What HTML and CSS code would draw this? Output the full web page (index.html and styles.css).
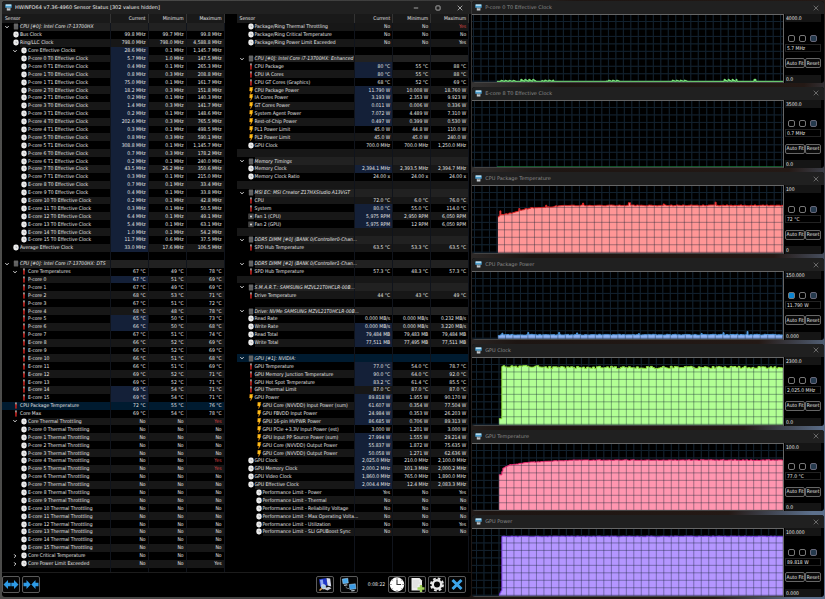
FILE: index.html
```
<!DOCTYPE html>
<html lang="en">
<head>
<meta charset="utf-8">
<title>HWiNFO64 Sensor Status</title>
<link rel="stylesheet" href="styles.css">
</head>
<body>
<svg class="symbols" aria-hidden="true">
  <symbol id="i-clock" viewBox="0 0 6 7"><rect x=".3" y=".6" width="5.4" height="5.8" rx="2.4" fill="#ececec"/><path d="M3 2.300v1.400h1.300" fill="none" stroke="#999" stroke-width=".6"/></symbol>
  <symbol id="i-temp" viewBox="0 0 6 7"><rect x="2.100" y=".4" width="1.700" height="3" fill="#a9a09c"/><rect x="2.100" y="2.200" width="1.700" height="4.400" fill="#b3201c"/></symbol>
  <symbol id="i-bolt" viewBox="0 0 6 7"><path d="M1.800.2h3.200L4.300 2.200H5L2.500 6.900 2.900 4H1.500z" fill="#ffc21a" stroke="#d8790a" stroke-width=".3"/></symbol>
  <symbol id="i-chip" viewBox="0 0 6 7"><rect x=".8" y=".5" width="4.400" height="6" rx=".4" fill="#5f5f5f"/><path d="M.8 2h4.400" stroke="#858585" stroke-width=".4"/></symbol>
  <symbol id="i-fan" viewBox="0 0 6 7"><rect x=".2" y=".6" width="5.600" height="5.600" rx=".5" fill="#444"/><circle cx="3" cy="3.400" r="1" fill="#ddd"/></symbol>
  <symbol id="i-open" viewBox="0 0 4 4"><path d="M.4 1.200 2 2.800 3.600 1.200" fill="none" stroke="#eee" stroke-width="1"/></symbol>
  <symbol id="i-closed" viewBox="0 0 4 4"><path d="M1.200.4 2.800 2 1.200 3.600" fill="none" stroke="#eee" stroke-width="1"/></symbol>
  <symbol id="i-app" viewBox="0 0 7 7"><path d="M.3.5h6.400v3.300H.3z" fill="#4a9fd0"/><path d="M.8.5h5.400v1.200H.8z" fill="#d8eef8"/><path d="M1.800 3.800h3.600v2.700H1.800z" fill="#c5ccd0"/><path d="M2.400 4.600h2.400" stroke="#555" stroke-width=".6"/></symbol>
  <symbol id="i-close" viewBox="0 0 6 6"><path d="M.7.7l4.600 4.600M5.300.7.7 5.300" stroke="currentColor" stroke-width=".7"/></symbol>
</svg>

<div class="desktop">
  <main class="window sensors-window">
    <header class="titlebar">
      <svg class="app-icon"><use href="#i-app"/></svg>
      <h1>HWiNFO64 v7.36-4960 Sensor Status [302 values hidden]</h1>
      <div class="caption">
        <button aria-label="Minimize"><svg viewBox="0 0 6 6"><path d="M.8 3h4.400" stroke="#ddd" stroke-width=".7"/></svg></button>
        <button aria-label="Maximize"><svg viewBox="0 0 6 6"><rect x=".9" y=".9" width="4.200" height="4.200" rx=".8" fill="none" stroke="#ddd" stroke-width=".7"/></svg></button>
        <button aria-label="Close"><svg viewBox="0 0 6 6"><use href="#i-close"/></svg></button>
      </div>
    </header>
    <div class="panels">
      <div class="panel panel-left"><table id="left"></table></div>
      <div class="panel panel-right"><table id="right"></table></div>
    </div>
    <footer class="toolbar">
      <button class="tool" aria-label="Expand columns"><svg viewBox="0 0 16 15"><path d="M.5 7.500 5 3v2.700h2.700v3.600H5V12zM15.500 7.500 11 3v2.700H8.300v3.600H11V12z" fill="#2e9be6"/></svg></button>
      <button class="tool" aria-label="Shrink columns"><svg viewBox="0 0 16 15"><path d="M7.700 7.500 3.500 3v2.700H.5v3.600h3V12zM8.300 7.500 12.500 3v2.700h3v3.600h-3V12z" fill="#2e9be6"/></svg></button>
      <span class="spacer"></span>
      <button class="tool" aria-label="Hardware summary"><svg viewBox="0 0 16 15"><path d="M2 2.300 9.500 1l1 7.500-7.300 1.300z" fill="#2038c8"/><path d="M3 3l2.800-.5.8 6-2.700.5z" fill="#8fa8f0"/><path d="M9.500 1l3.700.4 1 8.200-3.700-1z" fill="#d9def0"/><path d="M6 11.500l6-1.800 2.500 1.500-4 2.300z" fill="#c9cdd8"/><circle cx="6.500" cy="9.800" r="2.200" fill="#a8d0ee" stroke="#e4e4e4" stroke-width=".7"/><path d="M4.900 11.400 2.500 13.500" stroke="#d39a55" stroke-width="1.500"/></svg></button>
      <button class="tool" aria-label="Remote sensors"><svg viewBox="0 0 16 15"><path d="M1.300 2 6.800 1.300 7.300 6 2 6.800z" fill="#49a8ec" stroke="#b8dcf4" stroke-width=".5"/><path d="M2.800 7.800 6 7.300l.8 1-3.500.8z" fill="#b8c4cc"/><path d="M8.300 7.500l6-.7.6 5-6 .8z" fill="#3a9ae4" stroke="#b8dcf4" stroke-width=".5"/><path d="M10 13.300l3.300-.4.700 1-3.500.6z" fill="#b8c4cc"/><path d="M5 9.500c0 1.800 1.300 2 3 2" fill="none" stroke="#8a949c" stroke-width=".8"/></svg></button>
      <time class="elapsed">0:08:22</time>
      <button class="tool" aria-label="Reset clock"><svg viewBox="0 0 16 15"><circle cx="8" cy="7.500" r="7.200" fill="#fff"/><path d="M8 2.500v5h4" fill="none" stroke="#333" stroke-width="1.100"/><path d="M8 .8v1.300M8 13v1.300M1.200 7.500h1.400M13.400 7.500h1.400M3.200 2.800l.9.900M12.800 2.800l-.9.900M3.200 12.200l.9-.9M12.800 12.200l-.9-.9" stroke="#444" stroke-width=".7"/></svg></button>
      <button class="tool" aria-label="Start logging"><svg viewBox="0 0 16 15"><path d="M2.500 1h8l2.500 2.500V13.500H2.500z" fill="#ededed"/><path d="M4 4h6M4 6h7M4 8h5M4 10h4" stroke="#ccc" stroke-width=".6"/><path d="M10.800 8h2.400v2.300h2.300v2.400h-2.300V15h-2.400v-2.300H8.500v-2.400h2.300z" fill="#a3d35b"/></svg></button>
      <button class="tool" aria-label="Settings"><svg viewBox="0 0 16 15"><circle cx="8" cy="7.500" r="6" fill="none" stroke="#e8e8e8" stroke-width="2" stroke-dasharray="2.700 2.012"/><circle cx="8" cy="7.500" r="4.200" fill="none" stroke="#e8e8e8" stroke-width="2.400"/></svg></button>
      <button class="tool" aria-label="Close sensors"><svg viewBox="0 0 16 15"><path d="M3.500 3l9 9M12.500 3l-9 9" stroke="#3da5ea" stroke-width="3"/></svg></button>
    </footer>
  </main>
  <aside class="graphs" id="graphs"></aside>
</div>
<script src="app.js"></script>
</body>
</html>
```
FILE: styles.css
```
* { box-sizing: border-box; }
body {
  margin: 0;
  background: #2a2624;
  color: #e6e6e6;
  font: 5px/7px "DejaVu Sans Condensed", "Noto Sans", sans-serif;
}
button, input { font: inherit; color: inherit; margin: 0; }
h1, h2 { margin: 0; font: 5px/7px "DejaVu Sans", sans-serif; }
svg { display: block; }
.symbols { position: absolute; width: 0; height: 0; }

.desktop {
  display: flex;
  gap: 1px;
  height: 100vh;
  background: linear-gradient(100deg, #50504e 0%, #3a3a3a 50%, #1d1512 62%, #241915 88%, #5c708c 97%);
}
.window { background: #000; border-radius: 3px; overflow: hidden; }
.sensors-window {
  flex: 4 1 0;
  margin: 1px 0 2px 2px;
  display: flex;
  flex-direction: column;
}
.titlebar {
  flex: none;
  display: flex;
  align-items: center;
  gap: 3px;
  height: 13px;
  padding-left: 3px;
  background: #202020;
}
.titlebar h1 { flex: 1; color: #f0f0f0; }
.app-icon { width: 7px; height: 7px; }
.caption { display: flex; }
.caption button {
  width: 22px;
  height: 13px;
  padding: 0;
  border: 0;
  background: none;
  display: grid;
  place-items: center;
}
.caption svg { width: 6px; height: 6px; color: #ddd; }

.panels {
  flex: 1;
  min-height: 0;
  display: grid;
  grid-template-columns: 1fr 1fr;
}
.panel { min-width: 0; }
.panel-left { padding-right: 12px; }
.panel-right { padding-right: 2px; }
.panel table {
  width: 100%;
  height: 100%;
  table-layout: fixed;
  border-collapse: separate;
  border-spacing: 0;
}
.panel th, .panel td {
  padding: 0 2px 0 0;
  font-weight: normal;
  text-align: right;
  white-space: nowrap;
  border-right: 1px solid #10141c;
}
.panel thead tr { height: 9px; }
.panel thead th { background: #191919; border-right-color: #333; }
.panel thead th:first-child { text-align: left; padding-left: 3px; }
.col-value { width: 38px; }
.panel tbody th { padding-right: 0; text-align: left; }

.name { display: flex; align-items: center; }
.name .twist { flex: none; width: 4px; height: 4px; margin: 0 4px 0 3px; }
.name .icon { flex: none; width: 6px; height: 7px; margin-right: 1px; }
.name.sub { padding-left: 8px; }
.name span { flex: none; }

tr.odd td { background: #171717; }
tr.odd th { background: linear-gradient(to right, #000 18px, #171717 18px); }
tr.odd.deep th { background: linear-gradient(to right, #000 26px, #171717 26px); }
tr.group td { background: #212121; }
tr.group th { background: linear-gradient(to right, #000 18px, #212121 18px); font-style: italic; }
tr td.hot { background: #142038; }
tr.selected td, tr.selected th { background: #001b30; }
td.alert { color: #d84444; }
tr.tail { height: 4px; }
tr.tail td { line-height: 1px; }

.toolbar {
  flex: none;
  display: flex;
  align-items: center;
  gap: 2px;
  height: 25px;
  padding: 0 5px 1px 0;
  border-top: 1px solid #1c1c1c;
}
.spacer { flex: 1; }
.tool {
  width: 18px;
  height: 17px;
  padding: 0;
  border: 1px solid #5a5a5a;
  border-radius: 2px;
  background: #050505;
  display: grid;
  place-items: center;
}
.tool svg { width: 16px; height: 15px; }
.toolbar .spacer + .tool { margin-right: 4px; }
.elapsed { padding: 0 1px 0 8px; }

.graphs {
  flex: 3 1 0;
  min-width: 0;
  display: grid;
  grid-template-rows: repeat(7, 1fr);
  gap: 4px;
  padding: 1px 1px 2px 0;
}
.graph { display: flex; flex-direction: column; min-height: 0; }
.graph .titlebar h2 { flex: 1; color: #8c8c8c; }
.graph .titlebar .close {
  width: 16px;
  height: 13px;
  padding: 0;
  border: 0;
  background: none;
  color: #888;
  display: grid;
  place-items: center;
}
.graph .close svg { width: 6px; height: 6px; }
.graph .body { flex: 1; min-height: 0; display: flex; }
.plot {
  flex: 1;
  min-width: 0;
  border-top: 1px solid #666;
  border-right: 1px solid #666;
  border-bottom: 1px solid #444;
}
.plot svg { width: 100%; height: 100%; }
.grid-back { stroke: #16242f; stroke-width: 1; fill: none; }
.grid-front { stroke: #102030; stroke-opacity: .38; stroke-width: 1; fill: none; }
.side {
  flex: none;
  width: 40px;
  padding: 0 3px 0 1px;
  display: flex;
  flex-direction: column;
  justify-content: space-between;
}
.side input[type=text] {
  width: 100%;
  height: 8px;
  padding: 0 1px;
  border: 0;
  background: #151515;
}
.side input.value[type=text] { border: 1px solid #222; background: #000; line-height: 6px; }
.readout { display: grid; gap: 2px; padding-top: 6px; }
.checks { display: flex; gap: 4px; padding-left: 3px; }
.checks input {
  appearance: none;
  width: 7px;
  height: 7px;
  border: 1px solid #777;
  border-radius: 2px;
  background: #000;
}
.checks input:disabled { background: #24394d; border-color: #667; }
.checks input:checked { background: #0a84d0; }
.actions { display: flex; }
.actions button {
  flex: auto;
  height: 10px;
  padding: 0;
  border: 1px solid #666;
  border-radius: 2px;
  background: #0a0a0a;
  white-space: nowrap;
}
```
FILE: app.js
```
// Row format: flags+icon | name | current | minimum | maximum
// Flags: ">" nested, "v" expanded, "^" collapsed, "*" selected.
// A value that starts with "!" has a highlighted cell, one with "~" is an alert.
const ICONS = { c: 'clock', t: 'temp', b: 'bolt', g: 'chip', f: 'fan' };

const clocks = ['5.7|1.0|147.5', '0.4|0.1|265.3', '0.8|0.3|208.8', '75.0|0.1|161.7', '18.2|0.3|151.8', '0.2|0.1|140.3',
  '1.4|0.3|141.7', '0.2|0.1|148.6', '202.6|0.3|765.5', '0.3|0.1|498.5', '0.8|0.3|590.1', '308.8|0.1|1,145.7',
  '0.7|0.3|178.2', '0.2|0.1|240.0', '43.5|26.2|350.6', '0.3|0.1|215.0', '0.7|0.1|33.4', '0.4|0.1|33.8',
  '0.2|0.1|42.8', '0.3|0.1|50.5', '6.4|0.1|49.1', '5.4|0.1|63.1', '1.0|0.1|54.2', '11.7|0.6|37.5'];
const temps = ['!67|51|69', '67|49|69', '68|53|71', '67|51|72', '68|48|78', '!65|50|73', '!66|50|68', '67|51|74',
  '66|52|69', '66|52|69', '66|51|68', '66|51|69', '69|52|71', '69|52|71', '!69|54|71', '!69|54|71'];
const unit = (values, u) => values.split('|').map(v => v + ' ' + u).join('|');
const core = i => (i < 8 ? 'P' : 'E') + '-core ' + i;

const left = [
  'vg|CPU [#0]: Intel Core i7-13700HX',
  'c|Bus Clock|' + unit('99.8|99.7|99.8', 'MHz'),
  'c|Ring/LLC Clock|' + unit('798.0|798.0|4,588.8', 'MHz'),
  '>vc|Core Effective Clocks|' + unit('!28.6|0.1|1,145.7', 'MHz'),
  ...clocks.map((v, i) => '>c|' + (i < 16 ? core(i >> 1) + ' T' + (i & 1) : core(i - 8) + ' T0') + ' Effective Clock|!' + unit(v, 'MHz')),
  'c|Average Effective Clock|' + unit('!33.0|17.6|106.5', 'MHz'),
  '',
  'vg|CPU [#0]: Intel Core i7-13700HX: DTS',
  '>vt|Core Temperatures|' + unit('67|49|78', '°C'),
  ...temps.map((v, i) => '>t|' + core(i) + '|' + unit(v, '°C')),
  '*t|CPU Package Temperature|' + unit('72|55|76', '°C'),
  't|Core Max|' + unit('69|54|78', '°C'),
  '>vc|Core Thermal Throttling|No|No|~Yes',
  ...temps.map((v, i) => '>c|' + core(i) + ' Thermal Throttling|No|No|' + (i === 4 || i === 5 ? '~Yes' : 'No')),
  '>^c|Core Critical Temperature|No|No|No',
  '>^c|Core Power Limit Exceeded|No|No|Yes',
];

const right = `c|Package/Ring Thermal Throttling|No|No|~Yes
c|Package/Ring Critical Temperature|No|No|No
c|Package/Ring Power Limit Exceeded|No|No|Yes

vg|CPU [#0]: Intel Core i7-13700HX: Enhanced
t|CPU Package|!80 °C|55 °C|88 °C
t|CPU IA Cores|!80 °C|55 °C|88 °C
t|CPU GT Cores (Graphics)|68 °C|52 °C|69 °C
b|CPU Package Power|!11.790 W|10.008 W|18.760 W
b|IA Cores Power|!3.193 W|2.353 W|9.923 W
b|GT Cores Power|!0.011 W|0.006 W|0.336 W
b|System Agent Power|!7.072 W|4.489 W|7.310 W
b|Rest-of-Chip Power|!0.497 W|0.399 W|0.530 W
b|PL1 Power Limit|45.0 W|44.8 W|110.0 W
b|PL2 Power Limit|45.0 W|45.0 W|240.0 W
c|GPU Clock|700.0 MHz|700.0 MHz|1,250.0 MHz

vg|Memory Timings
c|Memory Clock|!2,394.1 MHz|2,393.5 MHz|2,394.7 MHz
c|Memory Clock Ratio|24.00 x|24.00 x|24.00 x

vg|MSI EC: MSI Creator Z17HXStudio A13VGT
t|CPU|72.0 °C|6.0 °C|76.0 °C
t|System|!80.0 °C|55.0 °C|114.0 °C
f|Fan 1 (CPU)|!5,975 RPM|2,950 RPM|6,050 RPM
f|Fan 2 (GPU)|!5,975 RPM|12 RPM|6,050 RPM

vg|DDR5 DIMM [#0] (BANK 0/Controller0-Chan...
t|SPD Hub Temperature|63.5 °C|53.3 °C|63.5 °C

vg|DDR5 DIMM [#2] (BANK 0/Controller1-Chan...
t|SPD Hub Temperature|57.3 °C|48.3 °C|57.3 °C

vg|S.M.A.R.T.: SAMSUNG MZVL21T0HCLR-00B...
t|Drive Temperature|44 °C|43 °C|49 °C

vg|Drive: NVMe SAMSUNG MZVL21T0HCLR-00B...
c|Read Rate|0.000 MB/s|0.000 MB/s|0.232 MB/s
c|Write Rate|!0.000 MB/s|0.000 MB/s|3.220 MB/s
c|Read Total|!79,484 MB|79,483 MB|79,484 MB
c|Write Total|!77,511 MB|77,495 MB|77,511 MB

*vg|GPU [#1]: NVIDIA:
t|GPU Temperature|!77.0 °C|54.0 °C|78.7 °C
t|GPU Memory Junction Temperature|!90.0 °C|64.0 °C|92.0 °C
t|GPU Hot Spot Temperature|!83.2 °C|61.4 °C|85.5 °C
t|GPU Thermal Limit|87.0 °C|87.0 °C|87.0 °C
b|GPU Power|!89.818 W|1.955 W|90.170 W
>b|GPU Core (NVVDD) Input Power (sum)|!61.607 W|0.354 W|77.504 W
>b|GPU FBVDD Input Power|!24.984 W|0.353 W|26.203 W
>b|GPU 16-pin HVPWR Power|!86.685 W|0.706 W|89.313 W
>b|GPU PCIe +3.3V Input Power (est)|3.000 W|1.201 W|3.000 W
>b|GPU Input PP Source Power (sum)|!27.994 W|1.555 W|29.214 W
>b|GPU Core (NVVDD) Output Power|!55.837 W|1.872 W|75.635 W
>b|GPU Core (NVVDD) Output Power|!50.058 W|1.271 W|62.636 W
c|GPU Clock|!2,025.0 MHz|210.0 MHz|2,100.0 MHz
c|GPU Memory Clock|!2,000.2 MHz|101.3 MHz|2,000.2 MHz
c|GPU Video Clock|!1,860.0 MHz|765.0 MHz|1,890.0 MHz
c|GPU Effective Clock|!2,004.4 MHz|12.4 MHz|2,083.3 MHz
>c|Performance Limit - Power|Yes|No|Yes
>c|Performance Limit - Thermal|No|No|No
>c|Performance Limit - Reliability Voltage|No|No|No
>c|Performance Limit - Max Operating Volta...|No|No|No
>c|Performance Limit - Utilization|No|No|Yes
>c|Performance Limit - SLI GPUBoost Sync|No|No|No`.split('\n');

function cell(v) {
  const kind = v[0] === '!' ? 'hot' : v[0] === '~' ? 'alert' : '';
  return `<td${kind ? ` class="${kind}"` : ''}>${v.replace(/^[!~]/, '')}</td>`;
}

function row(line, index) {
  const [flags, name, ...values] = line.split('|');
  if (!name) {
    return `<tr${index % 2 ? '' : ' class="odd"'}><td>&nbsp;</td><td></td><td></td><td></td></tr>`;
  }
  const icon = flags.slice(-1);
  const cls = [index % 2 ? '' : 'odd', icon === 'g' ? 'group' : '', flags.includes('>') ? 'deep' : '', flags.includes('*') ? 'selected' : ''];
  const twist = flags.includes('v') ? 'open' : flags.includes('^') ? 'closed' : '';
  while (values.length < 3) values.push('');
  return `<tr class="${cls.filter(Boolean).join(' ')}"><th scope="row"><div class="name${flags.includes('>') ? ' sub' : ''}">` +
    `<svg class="twist">${twist ? `<use href="#i-${twist}"/>` : ''}</svg><svg class="icon"><use href="#i-${ICONS[icon]}"/></svg>` +
    `<span>${name}</span></div></th>${values.map(cell).join('')}</tr>`;
}

function fill(id, rows) {
  rows = rows.concat(Array(69 - rows.length).fill(null));
  document.getElementById(id).innerHTML =
    '<colgroup><col><col class="col-value"><col class="col-value"><col class="col-value"></colgroup>' +
    '<thead><tr><th>Sensor</th><th>Current</th><th>Minimum</th><th>Maximum</th></tr></thead><tbody>' +
    rows.map((r, i) => r === null ? '<tr><td>&nbsp;</td><td></td><td></td><td></td></tr>' : row(r, i)).join('') +
    '<tr class="tail"><td></td><td></td><td></td><td></td></tr></tbody>';
}
fill('left', left);
fill('right', right);

// Plot space is 312 x 67 units; each series is a list of [x, y] knots plus jitter and spikes.
const W = 312, H = 67;
const graphs = [
  { name: 'P-core 0 T0 Effective Clock', max: '4000.0', value: '5.7 MHz', min: '0.0', fill: '#8f8', line: '#7ce87c', phase: 1,
    knots: [[25, 66.6], [W, 66.6]], jitter: 0, bursts: [[28, 44, 1], [49, 64, 2], [70, 82, 1.3], [135, 149, 1.2], [201, 217, 1.2], [252, 266, 2], [283, 285, 2]] },
  { name: 'E-core 8 T0 Effective Clock', max: '3500.0', value: '0.7 MHz', min: '0.0', fill: '#1c9a40', line: '#1c9a40', phase: 2,
    knots: [[25, 66.2], [W, 66.2]], jitter: 0, bursts: [] },
  { name: 'CPU Package Temperature', max: '100', value: '72 °C', min: '0', fill: '#ff9696', line: '#e02424', phase: 2,
    knots: [[26, 31], [28, 29], [40, 27], [48, 24.5], [58, 22], [80, 21], [87, 19.5], [W, 19.5]], jitter: .9,
    bursts: [[28, 29, 4], [47, 48, 2], [74, 75, 2], [111, 112, 2], [157, 159, 2.5], [192, 193, 1.5], [244, 245, 3]] },
  { name: 'CPU Package Power', max: '150.000', value: '11.790 W', min: '0.000', fill: '#8fb2f2', line: '#4c97dc', phase: 3, checked: true,
    knots: [[26, 64], [29, 63], [W, 63]], jitter: .9,
    bursts: [[30, 31, 1.5], [56, 57, 2], [87, 88, 2], [105, 106, 1.5], [167, 168, 1.5], [230, 231, 1.5], [252, 253, 2], [276, 277, 3]] },
  { name: 'GPU Clock', max: '2300.0', value: '2,025.0 MHz', min: '0.0', fill: '#b2ff94', line: '#98ea3c', phase: 4,
    knots: [[27, 61], [29, 61], [29.5, 8.5], [70, 8.5], [80, 9.5], [W, 9.5]], jitter: 2.2, bursts: [] },
  { name: 'GPU Temperature', max: '100.0', value: '77.0 °C', min: '0.0', fill: '#ff96b0', line: '#ee2a72', phase: 4,
    knots: [[27, 31], [29, 31], [31, 24], [38, 21], [55, 18.5], [80, 17], [110, 16.2], [W, 16.2]], jitter: .6, bursts: [] },
  { name: 'GPU Power', max: '100.000', value: '89.818 W', min: '0.000', fill: '#b496ff', line: '#7f44ea', phase: 4,
    knots: [[27, 66], [29, 62], [30, 7.5], [W, 7.5]], jitter: .6, bursts: [] },
];

function outline(g) {
  let seed = 7 + g.name.length, n = 0, k = 0;
  const points = [];
  for (let x = g.knots[0][0]; x <= W; x++) {
    while (k < g.knots.length - 2 && x >= g.knots[k + 1][0]) k++;
    const [x0, y0] = g.knots[k], [x1, y1] = g.knots[k + 1];
    seed = (seed * 1103515245 + 12345) % 2147483648;
    if (x % 2) n = (seed / 2147483648 - .5) * g.jitter;
    let y = y0 + (y1 - y0) * Math.min(1, (x - x0) / (x1 - x0)) + (x > 30 ? n : 0);
    for (const [a, b, h] of g.bursts) if (x >= a && x < b) y -= b - a > 3 ? h * ((x * 7) % 4) / 3 : h;
    points.push(`H${x}V${y.toFixed(1)}`);
  }
  return points.join('');
}

function graph(g, i) {
  const start = g.knots[0][0], path = outline(g);
  let grid = '';
  for (let x = g.phase + .5; x < W; x += 7.52) grid += `M${x.toFixed(1)} 0V${H}`;
  for (let y = 6.5; y < H; y += 7.5) grid += `M0 ${y}H${W}`;
  return `<section class="window graph">
    <header class="titlebar"><svg class="app-icon"><use href="#i-app"/></svg><h2>${g.name}</h2>
      <button class="close" aria-label="Close"><svg><use href="#i-close"/></svg></button></header>
    <div class="body">
      <div class="plot"><svg viewBox="0 0 ${W} ${H}" preserveAspectRatio="none" role="img" aria-label="${g.name}">
        <path class="grid-back" d="${grid}"/>
        <path d="M${start} ${H}${path}V${H}Z" fill="${g.fill}"/>
        <path class="grid-front" d="${grid}"/>
        <path d="M${start} ${g.knots[0][1]}${path}" fill="none" stroke="${g.line}"/></svg></div>
      <div class="side">
        <input type="text" aria-label="Scale maximum" value="${g.max}">
        <div class="readout">
          <div class="checks">
            <input type="checkbox" aria-label="Line"${g.checked ? ' checked' : ''}>
            <input type="checkbox" aria-label="Fixed">
            <input type="checkbox" aria-label="Fill" disabled>
          </div>
          <input class="value" type="text" aria-label="Current value" value="${g.value}" readonly>
        </div>
        <div class="actions"><button>Auto Fit</button><button>Reset</button></div>
        <input type="text" aria-label="Scale minimum" value="${g.min}">
      </div>
    </div></section>`;
}
document.getElementById('graphs').innerHTML = graphs.map(graph).join('');
```
